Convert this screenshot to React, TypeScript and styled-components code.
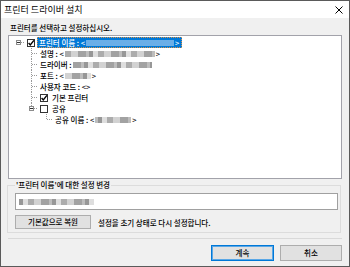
import React from 'react';
import styled, { createGlobalStyle } from 'styled-components';

const FONT = '"Noto Sans CJK KR", "Noto Sans", sans-serif';

const GlobalStyle = createGlobalStyle`
  html, body { margin: 0; padding: 0; background: #ffffff; }
  body { font-family: ${FONT}; }
`;

const Window = styled.div`
  width: 350px;
  height: 267px;
  box-sizing: border-box;
  border: 1px solid #5a5a5a;
  display: flex;
  flex-direction: column;
  background: #f0f0f0;
  font-family: ${FONT};
  font-weight: 500;
  color: #000;
  overflow: hidden;
`;

const TitleBar = styled.div`
  height: 17px;
  flex-shrink: 0;
  background: #fff;
  display: flex;
  align-items: center;
  justify-content: space-between;
  padding: 0 6px 0 3px;
  font-size: 9px;
  font-weight: 400;
`;

const Body = styled.div`
  flex: 1;
  display: flex;
  flex-direction: column;
  padding: 2px 7px 0 7px;
  font-size: 7.5px;
`;

const Instruction = styled.div`
  line-height: 15px;
  height: 15px;
  padding-left: 2px;
`;

const TreeBox = styled.div`
  height: 144px;
  box-sizing: border-box;
  border: 1px solid #a2a2aa;
  background: #fff;
  padding: 1px 0 0 3px;
`;

const TreeRow = styled.div`
  display: flex;
  align-items: center;
  height: 11px;
  line-height: 11px;
  white-space: nowrap;
`;

const CheckWrap = styled.span`
  display: flex;
  margin-left: 2px;
`;

const Label = styled.span<{ $selected?: boolean; $afterCheck?: boolean }>`
  display: flex;
  align-items: center;
  box-sizing: border-box;
  height: 11px;
  padding: 0 2px 0 1px;
  margin-left: ${(p) => (p.$afterCheck ? '2px' : '0')};
  background: ${(p) => (p.$selected ? '#0078d7' : 'transparent')};
  color: ${(p) => (p.$selected ? '#fff' : '#000')};
  border: 1px dotted ${(p) => (p.$selected ? '#d8924a' : 'transparent')};
`;

const BlurBar = styled.span<{ $w: number }>`
  display: inline-flex;
  width: ${(p) => p.$w}px;
  height: 6px;
  overflow: hidden;
  filter: blur(0.5px);
  margin: 0 1px;
`;

const Smudge = styled.span<{ $c: string; $w: number }>`
  display: block;
  flex-shrink: 0;
  width: ${(p) => p.$w}px;
  height: 6px;
  background: ${(p) => p.$c};
`;

const Group = styled.fieldset`
  margin: 1px 1px 0 -1px;
  padding: 0 2px 0 7px;
  border: 1px solid #dcdcdc;
  height: 53px;
  box-sizing: border-box;
  min-width: 0;
  display: flex;
  flex-direction: column;
`;

const Legend = styled.legend`
  font-size: 7.5px;
  line-height: 10px;
  padding: 0 1px;
`;

const Field = styled.div`
  margin-top: 3px;
  height: 17px;
  box-sizing: border-box;
  border: 1px solid #a0a0a0;
  background: #fff;
  display: flex;
  align-items: center;
  padding-left: 2px;
`;

const ResetRow = styled.div`
  margin-top: 5px;
  display: flex;
  align-items: center;
  gap: 7px;
`;

const Button = styled.button<{ $default?: boolean; $w: number }>`
  width: ${(p) => p.$w}px;
  height: ${(p) => (p.$default !== undefined ? 16 : 14)}px;
  box-sizing: border-box;
  padding: 0;
  margin: 0;
  background: #e1e1e1;
  border: 1px solid ${(p) => (p.$default ? '#0078d7' : '#adadad')};
  box-shadow: ${(p) => (p.$default ? 'inset 0 0 0 1px #5aa7e6' : 'none')};
  font-family: ${FONT};
  font-size: 7.5px;
  font-weight: 500;
  color: #000;
  line-height: 1;
`;

const Separator = styled.div`
  margin-top: 5px;
  height: 1px;
  background: #d9d9d9;
`;

const Footer = styled.div`
  margin-top: 6px;
  display: flex;
  justify-content: flex-end;
  gap: 6px;
`;

const GRAY = ['#bdbdbd', '#a2a2a2', '#d2d2d2', '#acacac', '#dedede', '#979797'];
const BLUE = ['#6aaee8', '#a4cdf1', '#4f9ee3', '#c9e1f7', '#82b9ec'];

function Blur({ w, palette = GRAY, seed = 1 }: { w: number; palette?: string[]; seed?: number }) {
  const segs: React.ReactNode[] = [];
  let x = 0;
  let i = seed;
  while (x < w) {
    const sw = 3 + ((i * 7) % 6);
    segs.push(<Smudge key={i} $w={Math.min(sw, w - x)} $c={palette[(i * 5) % palette.length]} />);
    x += sw;
    i++;
  }
  return <BlurBar $w={w}>{segs}</BlurBar>;
}

type Guide = 'none' | 'tee' | 'elbow' | 'root';

function Connector({ guide, expander, width = 13 }: { guide: Guide; expander?: boolean; width?: number }) {
  const line = { stroke: '#9a9a9a', strokeDasharray: '1 1', shapeRendering: 'crispEdges' as const };
  const cx = width - 6.5;
  return (
    <svg width={width} height="11" viewBox={`0 0 ${width} 11`}>
      {guide === 'tee' && <line x1={cx} y1="0" x2={cx} y2="11" {...line} />}
      {guide === 'elbow' && <line x1={cx} y1="0" x2={cx} y2="5" {...line} />}
      {guide !== 'none' && <line x1={expander ? cx + 2.5 : cx + 0.5} y1="5.5" x2={width} y2="5.5" {...line} />}
      {expander && (
        <g shapeRendering="crispEdges">
          <rect x={cx - 2} y="3.5" width="4" height="4" fill="#fff" stroke="#8c8c8c" />
          <line x1={cx - 1.5} y1="5.5" x2={cx + 1.5} y2="5.5" stroke="#333" />
        </g>
      )}
    </svg>
  );
}

function Check({ on }: { on: boolean }) {
  return (
    <CheckWrap>
      <svg width="8" height="8" viewBox="0 0 8 8">
        <rect x="0.5" y="0.5" width="7" height="7" fill="#fff" stroke="#333" shapeRendering="crispEdges" />
        {on && <path d="M1.6 4 L3.3 5.9 L6.9 1.4" fill="none" stroke="#000" strokeWidth="1.4" />}
      </svg>
    </CheckWrap>
  );
}

interface RowData {
  guides: Guide[];
  expander?: boolean;
  check?: boolean;
  selected?: boolean;
  label: React.ReactNode;
}

const rows: RowData[] = [
  {
    guides: ['root'],
    expander: true,
    check: true,
    selected: true,
    label: (
      <>
        프린터 이름 : &lt;<Blur w={88} palette={BLUE} seed={2} />&gt;
      </>
    ),
  },
  { guides: ['none', 'tee'], label: <>설명 : &lt;<Blur w={90} seed={3} />&gt;</> },
  { guides: ['none', 'tee'], label: <>드라이버 : <Blur w={79} seed={5} /></> },
  { guides: ['none', 'tee'], label: <>포트 : &lt;<Blur w={26} seed={4} />&gt;</> },
  { guides: ['none', 'tee'], label: <>사용자 코드 : &lt;&gt;</> },
  { guides: ['none', 'tee'], check: true, label: <>기본 프린터</> },
  { guides: ['none', 'elbow'], expander: true, check: false, label: <>공유</> },
  { guides: ['none', 'none', 'elbow'], label: <>공유 이름 : &lt;<Blur w={36} seed={6} />&gt;</> },
];

export default function App() {
  return (
    <>
      <GlobalStyle />
      <Window>
        <TitleBar>
          <span>프린터 드라이버 설치</span>
          <svg width="8" height="8" viewBox="0 0 8 8">
            <path d="M0.5 0.5 L7.5 7.5 M7.5 0.5 L0.5 7.5" stroke="#000" strokeWidth="1" />
          </svg>
        </TitleBar>
        <Body>
          <Instruction>프린터를 선택하고 설정하십시오.</Instruction>
          <TreeBox>
            {rows.map((r, idx) => (
              <TreeRow key={idx}>
                {r.guides.map((g, gi) => (
                  <Connector
                    key={gi}
                    guide={g}
                    width={r.guides.length === 3 && gi === 2 ? 15 : 13}
                    expander={gi === r.guides.length - 1 && r.expander}
                  />
                ))}
                {r.check !== undefined && <Check on={r.check} />}
                <Label $selected={r.selected} $afterCheck={r.check !== undefined}>
                  {r.label}
                </Label>
              </TreeRow>
            ))}
          </TreeBox>
          <Group>
            <Legend>'프린터 이름'에 대한 설정 변경</Legend>
            <Field>
              <Blur w={75} seed={7} />
            </Field>
            <ResetRow>
              <Button $w={76}>기본값으로 복원</Button>
              <span>설정을 초기 상태로 다시 설정합니다.</span>
            </ResetRow>
          </Group>
          <Separator />
          <Footer>
            <Button $default $w={63}>계속</Button>
            <Button $default={false} $w={62}>취소</Button>
          </Footer>
        </Body>
      </Window>
    </>
  );
}
